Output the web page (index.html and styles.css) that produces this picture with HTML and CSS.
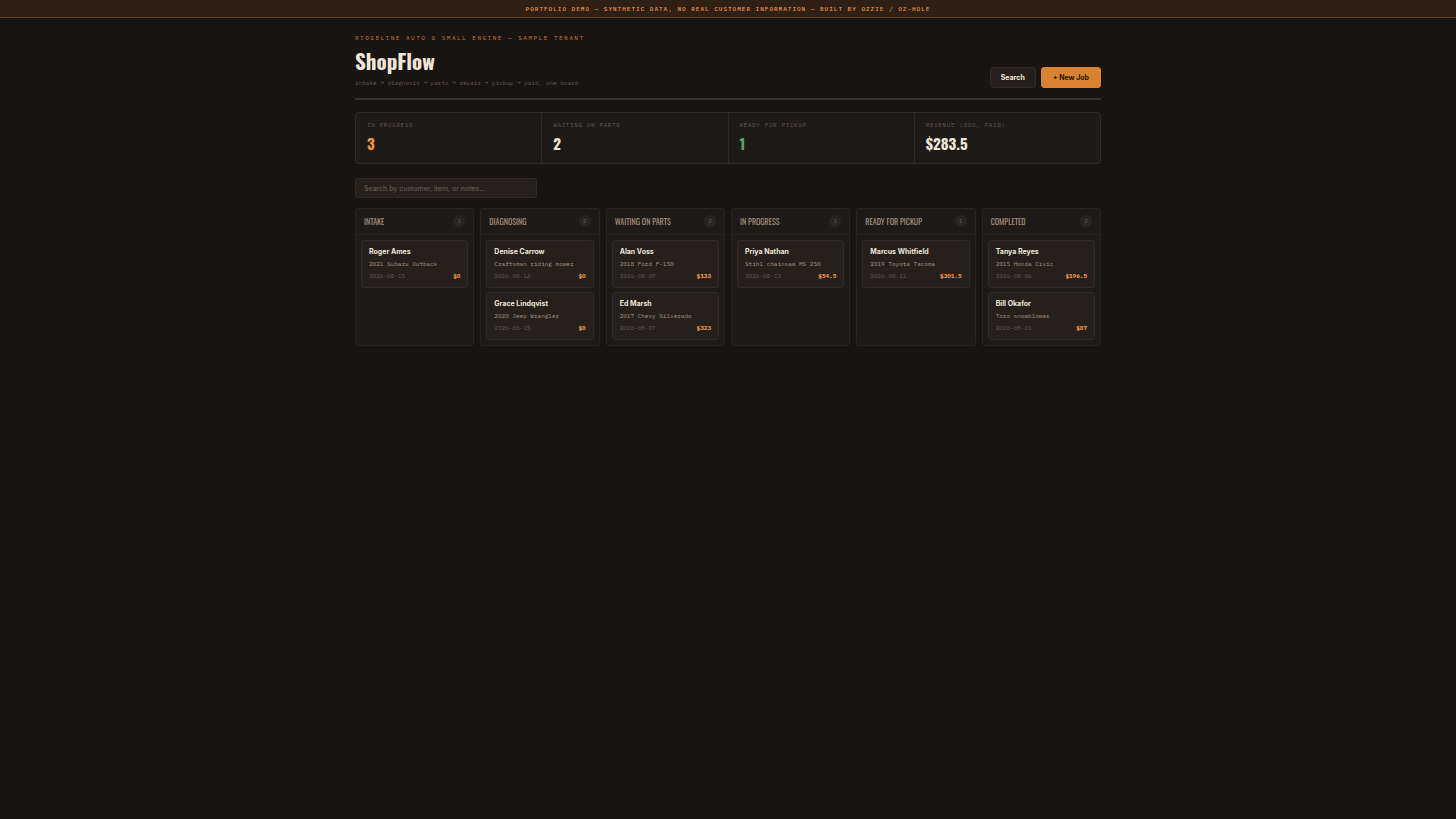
FILE: index.html
```
<!DOCTYPE html>
<html lang="en">
<head>
<meta charset="utf-8">
<title>ShopFlow</title>
<meta name="viewport" content="width=device-width, initial-scale=1">
<link rel="stylesheet" href="styles.css">
</head>
<body>
<div class="banner">Portfolio demo — synthetic data, no real customer information — built by Ozzie / Oz-Hole</div>
<div class="wrap">
  <header class="header">
    <div>
      <p class="eyebrow">Ridgeline Auto &amp; Small Engine — Sample Tenant</p>
      <h1 class="title">ShopFlow</h1>
      <p class="subtitle">intake → diagnosis → parts → repair → pickup → paid, one board</p>
    </div>
    <div class="actions">
      <button class="btn" type="button">Search</button>
      <button class="btn btn-primary" type="button">+ New Job</button>
    </div>
  </header>
  <section class="stats">
    <div class="stat"><div class="stat-label">In progress</div><div class="stat-value accent">3</div></div>
    <div class="stat"><div class="stat-label">Waiting on parts</div><div class="stat-value">2</div></div>
    <div class="stat"><div class="stat-label">Ready for pickup</div><div class="stat-value good">1</div></div>
    <div class="stat"><div class="stat-label">Revenue (30d, paid)</div><div class="stat-value">$283.5</div></div>
  </section>
  <input class="search" type="search" aria-label="Search jobs" placeholder="Search by customer, item, or notes...">
  <main class="board">
    <section class="column">
      <div class="column-head"><h2>Intake</h2><span class="count">1</span></div>
      <div class="cards">
        <article class="card"><h3>Roger Ames</h3><p>2021 Subaru Outback</p><div class="meta"><time>2026-08-15</time><b>$0</b></div></article>
      </div>
    </section>
    <section class="column">
      <div class="column-head"><h2>Diagnosing</h2><span class="count">2</span></div>
      <div class="cards">
        <article class="card"><h3>Denise Carrow</h3><p>Craftsman riding mower</p><div class="meta"><time>2026-08-14</time><b>$0</b></div></article>
        <article class="card"><h3>Grace Lindqvist</h3><p>2020 Jeep Wrangler</p><div class="meta"><time>2026-08-15</time><b>$0</b></div></article>
      </div>
    </section>
    <section class="column">
      <div class="column-head"><h2>Waiting on parts</h2><span class="count">2</span></div>
      <div class="cards">
        <article class="card"><h3>Alan Voss</h3><p>2018 Ford F-150</p><div class="meta"><time>2026-08-09</time><b>$133</b></div></article>
        <article class="card"><h3>Ed Marsh</h3><p>2017 Chevy Silverado</p><div class="meta"><time>2026-08-07</time><b>$323</b></div></article>
      </div>
    </section>
    <section class="column">
      <div class="column-head"><h2>In progress</h2><span class="count">1</span></div>
      <div class="cards">
        <article class="card"><h3>Priya Nathan</h3><p>Stihl chainsaw MS 250</p><div class="meta"><time>2026-08-13</time><b>$54.5</b></div></article>
      </div>
    </section>
    <section class="column">
      <div class="column-head"><h2>Ready for pickup</h2><span class="count">1</span></div>
      <div class="cards">
        <article class="card"><h3>Marcus Whitfield</h3><p>2019 Toyota Tacoma</p><div class="meta"><time>2026-08-11</time><b>$301.5</b></div></article>
      </div>
    </section>
    <section class="column">
      <div class="column-head"><h2>Completed</h2><span class="count">2</span></div>
      <div class="cards">
        <article class="card"><h3>Tanya Reyes</h3><p>2015 Honda Civic</p><div class="meta"><time>2026-08-06</time><b>$196.5</b></div></article>
        <article class="card"><h3>Bill Okafor</h3><p>Toro snowblower</p><div class="meta"><time>2026-08-03</time><b>$87</b></div></article>
      </div>
    </section>
  </main>
</div>
</body>
</html>
```
FILE: styles.css
```
:root {
  --bg: #181411;
  --panel: #1e1a17;
  --raised: #25201c;
  --line: #302b26;
  --text: #f0e6d8;
  --muted: #a8917c;
  --faint: #62584e;
  --accent: #f2954a;
  --mono: "IBM Plex Mono", "Liberation Mono", "DejaVu Sans Mono", monospace;
  --display: Oswald, "Liberation Sans Narrow", "Roboto Condensed", "Liberation Sans", sans-serif;
}
* { box-sizing: border-box; margin: 0; }
body {
  background: var(--bg);
  color: var(--text);
  font-family: Inter, "Liberation Sans", sans-serif;
  font-size: 8px;
}
.banner {
  padding: 5px 12px 3px;
  background: #2e2014;
  border-bottom: 1px solid #644220;
  color: var(--accent);
  font: 500 6px/9px var(--mono);
  letter-spacing: 1px;
  text-align: center;
  text-transform: uppercase;
}
.wrap { max-width: 770px; margin: 0 auto; padding: 16px 12px; }
.header {
  display: flex;
  justify-content: space-between;
  align-items: flex-end;
  padding-bottom: 10px;
  border-bottom: 2px solid #38322d;
}
.eyebrow {
  color: #d9742f;
  font: 6px/8px var(--mono);
  letter-spacing: 0.25em;
  text-transform: uppercase;
}
.title { margin: 5px 0 4px; font: 700 21px/28px var(--display); }
.subtitle { padding-bottom: 1px; color: var(--faint); font: 6px/8px var(--mono); }
.actions { display: flex; gap: 5px; }
.btn {
  height: 21px;
  padding: 0 10px;
  border: 1px solid var(--line);
  border-radius: 3px;
  background: var(--raised);
  color: var(--text);
  font: 700 7px/10px Inter, sans-serif;
}
.btn-primary { padding: 0 11px; border-color: #d9822f; background: #d9822f; color: #24160a; }
.stats {
  display: grid;
  grid-template-columns: repeat(4, 1fr);
  gap: 1px;
  margin: 12px 0 14px;
  border: 1px solid var(--line);
  border-radius: 3px;
  background: var(--line);
  overflow: hidden;
}
.stat { padding: 8px 11px 9px; background: var(--panel); }
.stat-label {
  color: var(--faint);
  font: 6px/8px var(--mono);
  letter-spacing: 0.1em;
  text-transform: uppercase;
}
.stat-value { margin-top: 3px; font: 700 15px/22px var(--display); }
.accent { color: var(--accent); }
.good { color: #5ea368; }
.search {
  display: block;
  width: 182px;
  height: 20px;
  padding: 0 8px;
  border: 1px solid var(--line);
  border-radius: 3px;
  background: var(--raised);
  color: var(--text);
  font: 7px/10px Inter, sans-serif;
}
.search::placeholder { color: #6e6256; opacity: 1; }
.board {
  display: grid;
  grid-template-columns: repeat(6, 1fr);
  gap: 6px;
  margin-top: 10px;
}
.column { border: 1px solid #29241f; border-radius: 3px; background: var(--panel); }
.column-head {
  display: flex;
  align-items: center;
  justify-content: space-between;
  padding: 6px 8px 7px;
  border-bottom: 1px solid #29241f;
}
.column-head h2 {
  color: var(--muted);
  font: 400 8px/12px var(--display);
  text-transform: uppercase;
}
.count {
  min-width: 12px;
  border-radius: 6px;
  background: #2a2521;
  color: var(--faint);
  font: 6px/12px var(--mono);
  text-align: center;
}
.cards { display: grid; gap: 4px; padding: 5px; }
.card {
  padding: 6px 7px 7px;
  border: 1px solid var(--line);
  border-radius: 3px;
  background: var(--raised);
}
.card h3 { font-size: 7px; font-weight: 700; line-height: 10px; }
.card p { margin: 3px 0 4px; color: var(--muted); font: 6px/8px var(--mono); }
.meta { display: flex; justify-content: space-between; font: 6px/8px var(--mono); }
.meta time { color: var(--faint); }
.meta b { color: var(--accent); }
```
